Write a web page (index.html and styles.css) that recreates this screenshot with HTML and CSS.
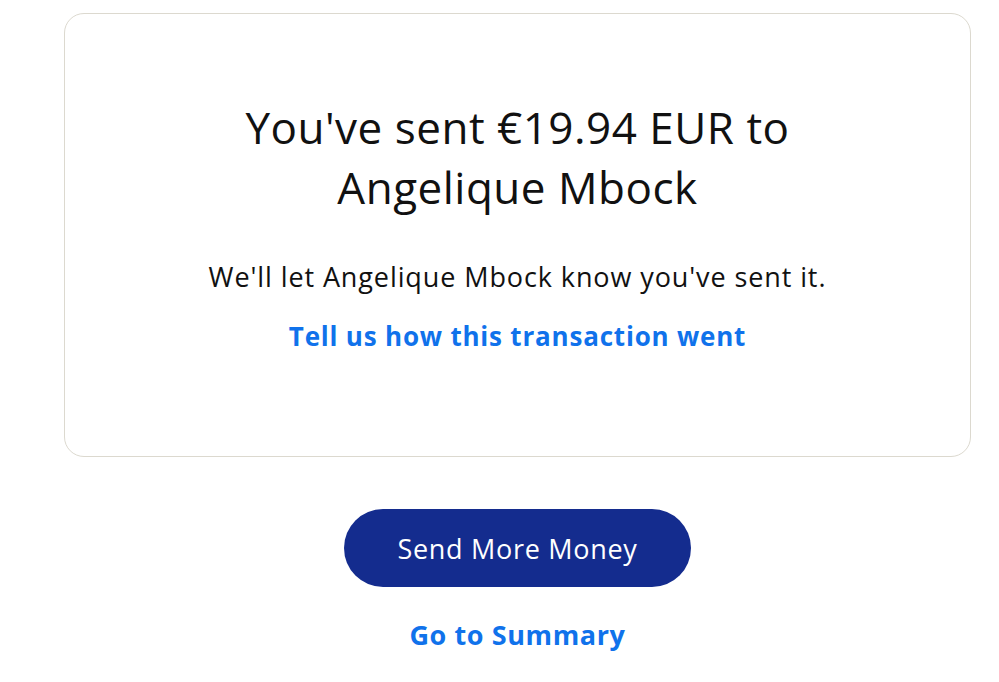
FILE: index.html
```html
<!DOCTYPE html>
<html lang="en">
<head>
<meta charset="utf-8">
<title>Money sent</title>
<link rel="stylesheet" href="styles.css">
</head>
<body>
<main class="page">
  <section class="card">
    <h1 class="title">You've sent €19.94 EUR to<br>Angelique Mbock</h1>
    <p class="note">We'll let Angelique Mbock know you've sent it.</p>
    <a class="link feedback" href="#">Tell us how this transaction went</a>
  </section>
  <div class="actions">
    <a class="btn-primary" href="#">Send More Money</a>
    <a class="link summary" href="#">Go to Summary</a>
  </div>
</main>
</body>
</html>
```

FILE: styles.css
```css
* { box-sizing: border-box; }
html, body { margin: 0; padding: 0; background: #ffffff; }
body {
  font-family: "Open Sans", "Lato", sans-serif;
  color: #111111;
}
.page {
  width: 907px;
  margin-left: 64px;
  padding-top: 13px;
}
.card {
  border: 1px solid #dcd9cf;
  border-radius: 20px;
  padding: 83px 40px 0;
  height: 444px;
  display: flex;
  flex-direction: column;
  align-items: center;
  text-align: center;
}
.title {
  margin: 0;
  font-size: 44px;
  line-height: 60px;
  letter-spacing: 0.5px;
  font-weight: 400;
}
.note {
  margin: 42px 0 0;
  font-size: 27px;
  line-height: 36px;
  letter-spacing: 0.9px;
}
.link {
  color: #1072eb;
  font-weight: 700;
  text-decoration: none;
  font-size: 26px;
  line-height: 36px;
  letter-spacing: 0.8px;
}
.feedback { margin-top: 23px; }
.actions {
  display: flex;
  flex-direction: column;
  align-items: center;
  padding-top: 52px;
}
.btn-primary {
  display: flex;
  align-items: center;
  justify-content: center;
  width: 347px;
  height: 78px;
  border-radius: 39px;
  background: #142c8e;
  color: #ffffff;
  font-size: 27px;
  letter-spacing: 0.7px;
  text-decoration: none;
}
.summary {
  margin-top: 30px;
  font-size: 27px;
  letter-spacing: 0.6px;
}
```
